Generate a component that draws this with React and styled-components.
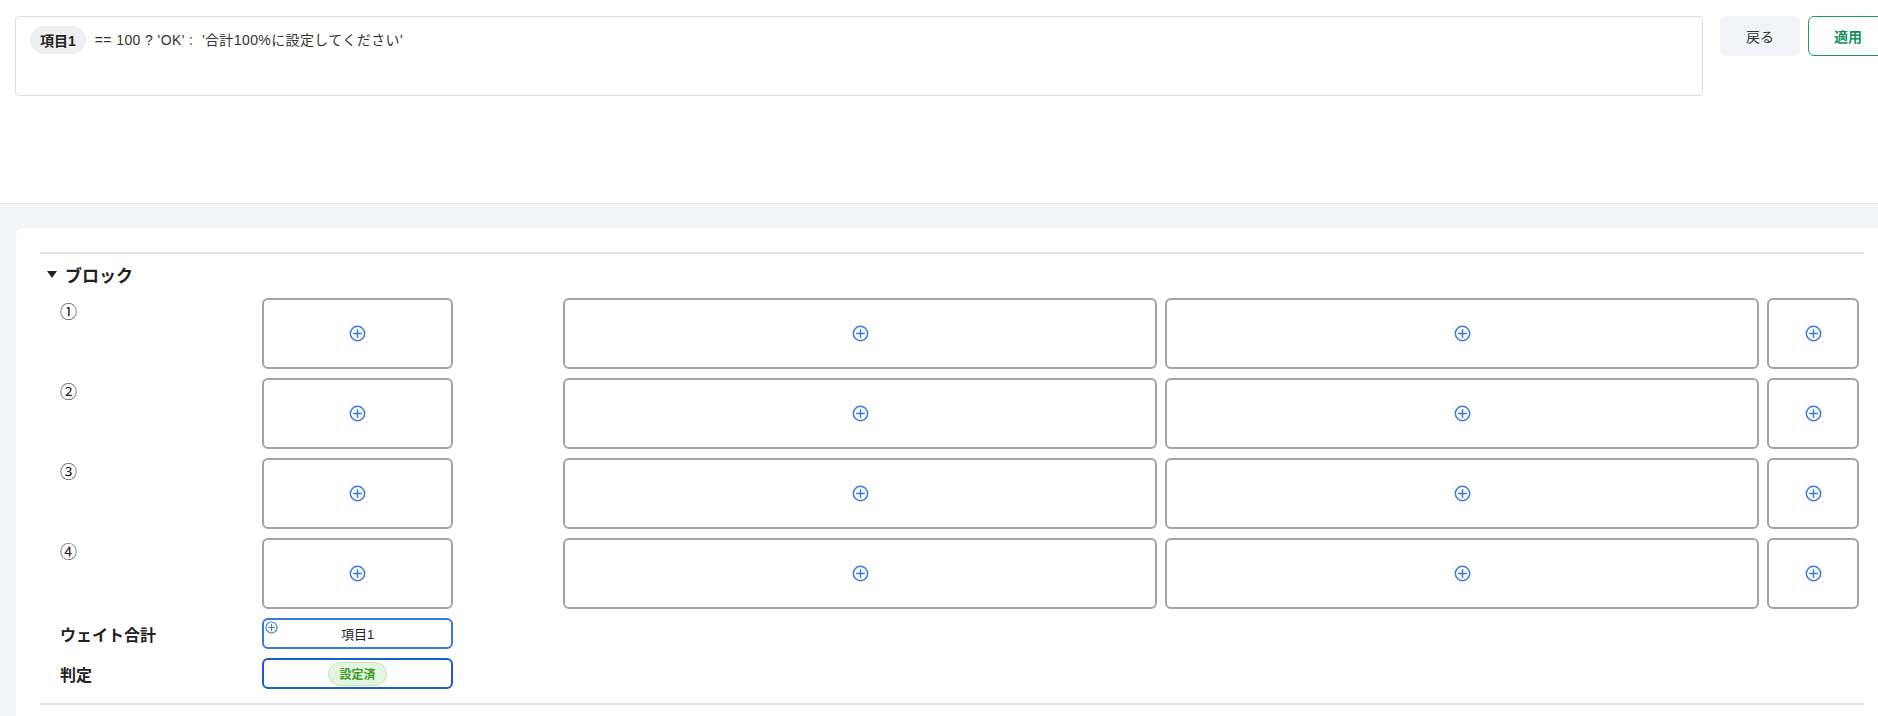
import React from 'react'
import styled, { createGlobalStyle } from 'styled-components'

const GlobalStyle = createGlobalStyle`
body {
    margin: 0;
    overflow: hidden;
    background: #f3f4f8;
    font-family: "Liberation Sans", "Noto Sans CJK JP", sans-serif;
    color: #222;
}
`

const slots = ['①', '②', '③', '④']

function PlusIcon({ size = 17 }) {
    return (
        <svg width={size} height={size} viewBox="0 0 18 18" fill="none">
            <circle cx="9" cy="9" r="7.6" stroke="#3d7be0" strokeWidth="1.6" />
            <path d="M9 5v8M5 9h8" stroke="#3d7be0" strokeWidth="1.6" strokeLinecap="round" />
        </svg>
    )
}

function App() {
    return (
        <Page>
            <GlobalStyle />
            <TopBar>
                <FormulaBox>
                    <Chip>項目1</Chip>
                    <FormulaText>== 100 ? 'OK' :&nbsp; '合計100%に設定してください'</FormulaText>
                </FormulaBox>
                <Buttons>
                    <BackButton>戻る</BackButton>
                    <ApplyButton>適用</ApplyButton>
                </Buttons>
            </TopBar>
            <Card>
                <Divider />
                <SectionTitle>
                    <Caret />
                    ブロック
                </SectionTitle>
                <Grid>
                    {slots.map((s) => (
                        <React.Fragment key={s}>
                            <RowLabel>{s}</RowLabel>
                            <Slot><PlusIcon /></Slot>
                            <span />
                            <Slot><PlusIcon /></Slot>
                            <Slot><PlusIcon /></Slot>
                            <Slot><PlusIcon /></Slot>
                        </React.Fragment>
                    ))}
                    <SummaryLabel>ウェイト合計</SummaryLabel>
                    <WeightBox>
                        <CornerPlus><PlusIcon size={13} /></CornerPlus>
                        項目1
                    </WeightBox>
                    <Filler />
                    <SummaryLabel>判定</SummaryLabel>
                    <JudgeBox>
                        <Pill>設定済</Pill>
                    </JudgeBox>
                    <Filler />
                </Grid>
                <Divider $bottom />
            </Card>
        </Page>
    )
}

export default App

const Page = styled.div`
width: 1904px;
min-height: 716px;
`

const TopBar = styled.div`
box-sizing: border-box;
height: 204px;
padding: 16px 16px 0 15px;
background: #fff;
border-bottom: 1px solid #e1e1e8;
display: flex;
align-items: flex-start;
gap: 17px;
`

const FormulaBox = styled.div`
flex: 1;
box-sizing: border-box;
height: 80px;
border: 1px solid #dcdce3;
border-radius: 4px;
padding: 9px 14px;
display: flex;
align-items: flex-start;
gap: 9px;
`

const Chip = styled.span`
display: inline-flex;
align-items: center;
height: 28px;
padding: 0 10px;
border-radius: 14px;
background: #efeff1;
font-size: 14px;
font-weight: 700;
color: #222;
`

const FormulaText = styled.span`
line-height: 28px;
font-size: 14px;
color: #333;
letter-spacing: 0.4px;
`

const Buttons = styled.div`
display: flex;
gap: 8px;
`

const BackButton = styled.button`
width: 80px;
height: 40px;
border: none;
border-radius: 6px;
background: #f2f3f7;
font-family: inherit;
font-size: 14px;
color: #333;
`

const ApplyButton = styled.button`
width: 80px;
height: 40px;
border: 1px solid #1c9a5c;
border-radius: 6px;
background: #fff;
font-family: inherit;
font-size: 14px;
font-weight: 700;
color: #16905a;
`

const Card = styled.div`
margin: 24px 16px 0;
padding: 24px 24px 40px;
background: #fff;
border-radius: 8px;
`

const Divider = styled.div`
height: 2px;
background: #e2e2e8;
margin-top: ${(p) => (p.$bottom ? '14px' : '0')};
`

const SectionTitle = styled.div`
display: flex;
align-items: center;
gap: 8px;
height: 24px;
margin: 8px 0 12px 7px;
font-size: 17px;
font-weight: 700;
color: #222;
`

const Caret = styled.span`
width: 0;
height: 0;
border-left: 5px solid transparent;
border-right: 5px solid transparent;
border-top: 7px solid #222;
`

const Grid = styled.div`
display: grid;
grid-template-columns: 214px 191px 94px 594px 594px 92px;
grid-template-rows: repeat(4, 71px) 31px 31px;
column-gap: 8px;
row-gap: 9px;
`

const RowLabel = styled.div`
padding: 4px 0 0 20px;
font-size: 17px;
line-height: 22px;
color: #222;
`

const SummaryLabel = styled.div`
align-self: center;
padding-left: 20px;
font-size: 16px;
font-weight: 700;
color: #222;
`

const Slot = styled.div`
border: 2px solid #a3a3a3;
border-radius: 6px;
display: flex;
align-items: center;
justify-content: center;
`

const WeightBox = styled.div`
position: relative;
border: 2px solid #3a7ad8;
border-radius: 6px;
display: flex;
align-items: center;
justify-content: center;
font-size: 13px;
color: #222;
`

const CornerPlus = styled.span`
position: absolute;
top: 1px;
left: 1px;
display: flex;
`

const JudgeBox = styled.div`
border: 2px solid #1a5cd2;
border-radius: 6px;
display: flex;
align-items: center;
justify-content: center;
`

const Pill = styled.span`
display: inline-flex;
align-items: center;
height: 22px;
padding: 0 10px;
border-radius: 12px;
border: 1px solid #c4e4b4;
background: #e3f5dc;
font-size: 12px;
font-weight: 700;
color: #3f9a2c;
`

const Filler = styled.div`
grid-column: span 4;
`
